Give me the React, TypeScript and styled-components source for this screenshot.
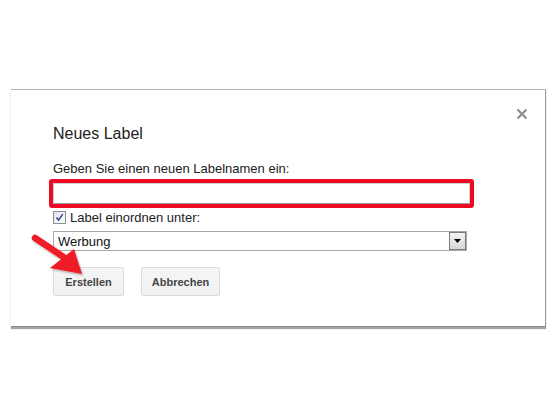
import React from "react";
import styled, { createGlobalStyle } from "styled-components";

const Global = createGlobalStyle`
  html, body { margin: 0; padding: 0; background: #ffffff; }
  body { font-family: Arial, "Liberation Sans", sans-serif; }
  #root { position: relative; width: 557px; height: 418px; overflow: hidden; }
`;

const Page = styled.div`
  position: relative;
  width: 557px;
  height: 418px;
  padding-top: 89px;
  box-sizing: border-box;
`;

const Dialog = styled.div`
  position: relative;
  margin-left: 11px;
  width: 535px;
  box-sizing: border-box;
  background: #fff;
  border-top: 1px solid #b4b4b4;
  border-right: 1px solid #9c9c9c;
  border-bottom: 1px solid #8a8a8a;
  box-shadow: 0 2px 1px rgba(0, 0, 0, 0.35);
  padding: 34px 0 30px 42px;
  display: flex;
  flex-direction: column;
  align-items: flex-start;
`;

const Close = styled.button`
  position: absolute;
  top: 18px;
  right: 17px;
  width: 12px;
  height: 12px;
  padding: 0;
  border: 0;
  background: transparent;
  display: flex;
`;

const Title = styled.h2`
  margin: 0 0 18px;
  font-size: 16px;
  line-height: 19px;
  font-weight: normal;
  color: #222;
`;

const FieldLabel = styled.div`
  font-size: 13px;
  line-height: 15px;
  color: #222;
  margin-bottom: 3px;
`;

const Highlight = styled.div`
  margin-left: -4px;
  border: 4px solid #ec0a25;
  border-radius: 3px;
  display: flex;
`;

const TextInput = styled.input`
  width: 417px;
  height: 21px;
  box-sizing: border-box;
  margin: 0;
  border: 1px solid #d0d0d0;
  border-bottom-color: #9a9a9a;
  outline: none;
  font: 13px Arial, "Liberation Sans", sans-serif;
`;

const CheckRow = styled.label`
  margin-top: 2px;
  display: flex;
  align-items: center;
  gap: 4px;
  height: 15px;
  font-size: 13px;
  color: #222;
`;

const Box = styled.span`
  width: 11px;
  height: 11px;
  border: 1px solid #8f8f8f;
  background: linear-gradient(135deg, #dfe2e8, #ffffff);
  display: flex;
  align-items: center;
  justify-content: center;
`;

const Select = styled.div`
  margin-top: 6px;
  width: 414px;
  height: 20px;
  box-sizing: border-box;
  border: 1px solid #a8a8a8;
  display: flex;
  align-items: center;
  justify-content: space-between;
  padding-left: 4px;
  font-size: 13px;
  color: #111;
`;

const DropBtn = styled.span`
  width: 17px;
  height: 18px;
  box-sizing: border-box;
  border: 1px solid #7c7c7c;
  background: linear-gradient(#f4f4f4, #d6d6d6);
  display: flex;
  align-items: center;
  justify-content: center;
`;

const Buttons = styled.div`
  margin-top: 16px;
  display: flex;
  gap: 17px;
`;

const Button = styled.button<{ $w: number }>`
  width: ${(p) => p.$w}px;
  height: 29px;
  box-sizing: border-box;
  padding: 0;
  border: 1px solid #dcdcdc;
  border-radius: 2px;
  background: linear-gradient(#f5f5f5, #f1f1f1);
  color: #444;
  font: bold 11px Arial, "Liberation Sans", sans-serif;
`;

const Arrow = styled.svg`
  position: absolute;
  left: 0;
  top: 0;
  pointer-events: none;
`;

export default function App() {
  return (
    <>
      <Global />
      <Page>
        <Dialog>
          <Close aria-label="Schließen">
            <svg width="12" height="12" viewBox="0 0 12 12">
              <path d="M1.5 1.5 L10.5 10.5 M10.5 1.5 L1.5 10.5" stroke="#8e8e8e" strokeWidth="2.2" />
            </svg>
          </Close>
          <Title>Neues Label</Title>
          <FieldLabel>Geben Sie einen neuen Labelnamen ein:</FieldLabel>
          <Highlight>
            <TextInput />
          </Highlight>
          <CheckRow>
            <Box>
              <svg width="9" height="9" viewBox="0 0 9 9">
                <path d="M1.5 4.5 L3.6 7 L7.8 1.2" fill="none" stroke="#2c3f8c" strokeWidth="1.4" />
              </svg>
            </Box>
            Label einordnen unter:
          </CheckRow>
          <Select>
            Werbung
            <DropBtn>
              <svg width="7" height="4" viewBox="0 0 7 4">
                <path d="M0 0 H7 L3.5 4 Z" fill="#000" />
              </svg>
            </DropBtn>
          </Select>
          <Buttons>
            <Button $w={71}>Erstellen</Button>
            <Button $w={79}>Abbrechen</Button>
          </Buttons>
        </Dialog>
        <Arrow width="557" height="418" viewBox="0 0 557 418">
          <defs>
            <filter id="sh" x="-20%" y="-20%" width="140%" height="140%">
              <feDropShadow dx="1" dy="1.5" stdDeviation="1" floodColor="#000" floodOpacity="0.3" />
            </filter>
          </defs>
          <g filter="url(#sh)" fill="#ee1c25">
            <path d="M35 238 L71 262" stroke="#ee1c25" strokeWidth="6.5" strokeLinecap="round" />
            <path d="M50 268 L74 249 L82 274 Z" />
          </g>
        </Arrow>
      </Page>
    </>
  );
}
